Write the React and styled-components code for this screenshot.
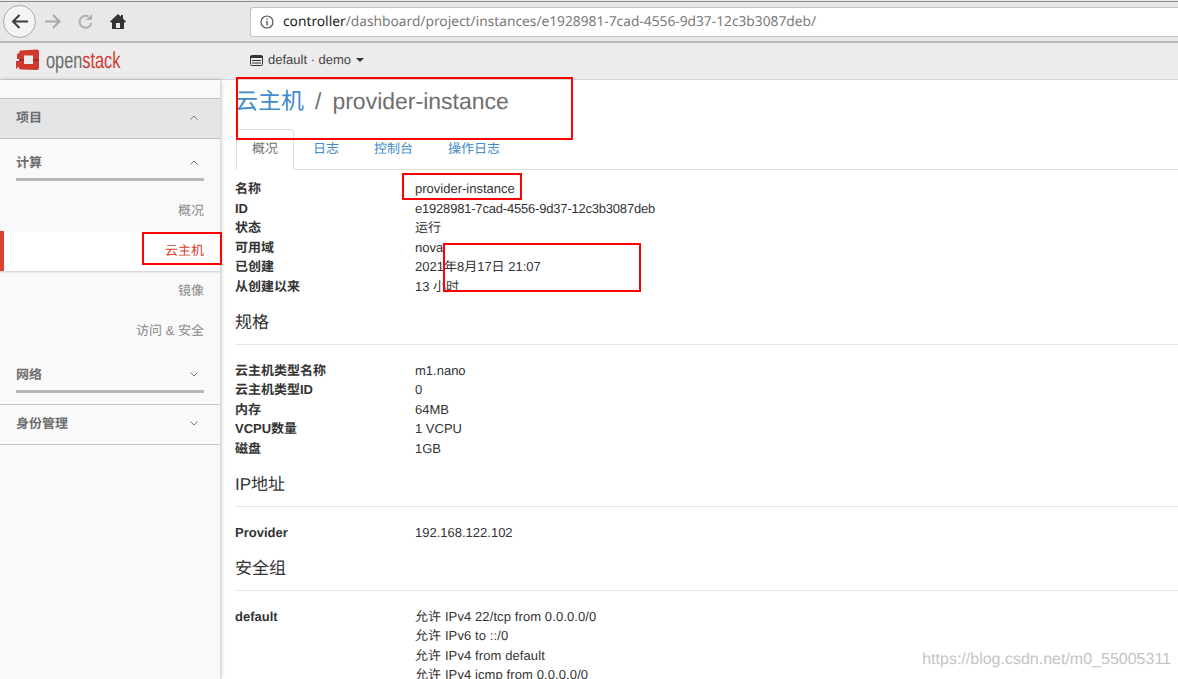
import React from 'react'
import styled, { createGlobalStyle } from 'styled-components'

const Global = createGlobalStyle`
  html, body { margin: 0; padding: 0; background: #fff; }
  body {
    font-family: "Liberation Sans", "Noto Sans CJK SC", sans-serif;
    font-size: 13px;
    line-height: 19.5px;
    color: #333;
    text-rendering: geometricPrecision;
  }
`

const Page = styled.div`
  position: relative;
  width: 1178px;
  height: 679px;
  overflow: hidden;
`

const BrowserBar = styled.div`
  height: 42px;
  box-sizing: border-box;
  border-bottom: 1px solid #b6b6b3;
  background: #e8e8e7;
  display: flex;
  align-items: flex-start;
  padding: 5px 0 0 3px;
  position: relative;
  &::before {
    content: '';
    position: absolute;
    left: 0;
    right: 0;
    top: 1px;
    height: 1px;
    background: #8e8e8c;
  }
`

const NavCluster = styled.div`
  display: flex;
  align-items: center;
  height: 33px;
  width: 247px;
  flex: none;
`

const BackButton = styled.div`
  width: 33px;
  height: 33px;
  box-sizing: border-box;
  border-radius: 50%;
  border: 1px solid #a8a8a6;
  background: #f4f4f3;
  display: flex;
  align-items: center;
  justify-content: center;
  flex: none;
`

const NavIcon = styled.div`
  display: flex;
  flex: none;
  margin-left: ${p => p.$shift}px;
`

const UrlField = styled.div`
  flex: 1;
  height: 30px;
  margin-top: 2px;
  box-sizing: border-box;
  background: #fff;
  border: 1px solid #c4c4c1;
  border-right: none;
  border-radius: 3px 0 0 3px;
  display: flex;
  align-items: center;
  padding-left: 9px;
  font-family: "Noto Sans", sans-serif;
  font-size: 13.75px;
  color: #7a7a7a;
`

const UrlHost = styled.span`
  color: #222;
  margin-left: 9px;
`

const TopBar = styled.div`
  height: 38px;
  box-sizing: border-box;
  background: #ececec;
  border-top: 1px solid #b9b9b7;
  border-bottom: 1px solid #d6d6d6;
  display: flex;
  align-items: center;
  padding-bottom: 2px;
`

const Brand = styled.div`
  width: 250px;
  flex: none;
  display: flex;
  align-items: center;
  padding-left: 15px;
  box-sizing: border-box;
  gap: 6px;
`

const BrandText = styled.span`
  display: inline-block;
  font-size: 23px;
  line-height: 24px;
  color: #6b6b6b;
  transform: scaleX(0.71);
  transform-origin: left center;
  b {
    font-weight: 400;
    color: #cf3a32;
  }
`

const ProjectPicker = styled.div`
  display: flex;
  align-items: center;
  gap: 5px;
  font-size: 13px;
  color: #444;
`

const Caret = styled.span`
  width: 0;
  height: 0;
  border-left: 4px solid transparent;
  border-right: 4px solid transparent;
  border-top: 4px solid #333;
`

const Body = styled.div`
  display: flex;
  height: 599px;
`

const Sidebar = styled.aside`
  width: 220px;
  flex: none;
  box-sizing: border-box;
  padding-top: 18px;
  background: #f9f9f9;
  box-shadow: 1px 0 4px rgba(0, 0, 0, 0.25);
  position: relative;
`

const TopSection = styled.div`
  height: 41px;
  box-sizing: border-box;
  margin-top: ${p => p.$gap || 0}px;
  border-top: 1px solid #c3c3c3;
  border-bottom: 1px solid #c3c3c3;
  background: ${p => (p.$shaded ? '#e4e5e7' : 'transparent')};
  display: flex;
  align-items: center;
  justify-content: space-between;
  padding: 0 22px 2px 16px;
  font-weight: 700;
  color: #6e6e6e;
`

const SubSection = styled.div`
  margin: 0 16px;
  height: 42px;
  box-sizing: border-box;
  padding: 14px 6px 0 0;
  border-bottom: 3px solid #b8b8b8;
  display: flex;
  justify-content: space-between;
  font-weight: 700;
  color: #6e6e6e;
  svg {
    margin-top: 7px;
  }
`

const NavItem = styled.div`
  height: 40px;
  box-sizing: border-box;
  padding-right: 16px;
  display: flex;
  align-items: center;
  justify-content: flex-end;
  color: ${p => (p.$active ? '#d9412f' : '#8a8a8a')};
  background: ${p => (p.$active ? '#fff' : 'transparent')};
  border-left: ${p => (p.$active ? '4px solid #dc4131' : 'none')};
  box-shadow: ${p => (p.$active ? '0 1px 2px rgba(0,0,0,0.18)' : 'none')};
`

const Items = styled.div`
  padding-top: 10px;
`

const Main = styled.main`
  flex: 1;
  padding: 0 0 0 15px;
  min-width: 0;
`

const Title = styled.h1`
  margin: 0;
  height: 41px;
  padding-top: 8px;
  font-weight: 400;
  font-size: 23px;
  line-height: 26px;
  color: #6f6f6f;
  box-sizing: content-box;
  a {
    color: #428bca;
  }
  i {
    font-style: normal;
    margin: 0 11px;
  }
`

const Tabs = styled.div`
  display: flex;
  height: 41px;
  box-sizing: border-box;
  margin-left: 1px;
  border-bottom: 1px solid #ddd;
`

const Tab = styled.div`
  box-sizing: border-box;
  height: ${p => (p.$active ? 41 : 40)}px;
  padding: 9px 15px 0 15px;
  margin-right: 3px;
  line-height: 20px;
  color: ${p => (p.$active ? '#6f6f6f' : '#428bca')};
  background: ${p => (p.$active ? '#fff' : 'transparent')};
  border: 1px solid ${p => (p.$active ? '#ddd' : 'transparent')};
  border-bottom: ${p => (p.$active ? '1px solid #fff' : 'none')};
  border-radius: 4px 4px 0 0;
`

const List = styled.dl`
  margin: ${p => p.$top}px 0 0;
  display: grid;
  grid-template-columns: 180px 1fr;
  grid-auto-rows: 19.5px;
  color: #333;
  dt {
    font-weight: 700;
  }
  dd {
    margin: 0;
    letter-spacing: ${p => p.$track || 0}px;
  }
`

const Uuid = styled.span`
  letter-spacing: -0.2px;
`

const Heading = styled.h4`
  margin: 17px 0 0;
  height: 30.5px;
  box-sizing: content-box;
  border-bottom: 1px solid #e6e6e6;
  font-weight: 400;
  font-size: 17px;
  line-height: 20px;
  color: #333;
`

const Mark = styled.div`
  position: absolute;
  box-sizing: border-box;
  border: 2px solid #f00;
  left: ${p => p.$x}px;
  top: ${p => p.$y}px;
  width: ${p => p.$w}px;
  height: ${p => p.$h}px;
`

const Watermark = styled.div`
  position: absolute;
  right: 7px;
  top: 650px;
  font-size: 16px;
  line-height: 20px;
  color: #c4c4c4;
`

const Chevron = ({ up }) => (
  <svg width="8" height="5" viewBox="0 0 8 5">
    <path d={up ? 'M.5 4.500 4 1l3.500 3.500' : 'M.5.5 4 4 7.500.5'} fill="none" stroke="#777" strokeWidth="1" />
  </svg>
)

const Logo = () => (
  <svg width="25" height="24" viewBox="0 0 25 24">
    <path d="M5 2.500 22 1.500q2 0 2 2V20q0 2-2 2L6 21.500q-2 0-2-1.500v-1.500L1 21V13h3V11H2V6l2-1z" fill="#d0392d" />
    <path d="M9 7.500h9V16H9z" fill="#ececec" />
    <path d="M5 11h4v2H5zM18 11h6v2h-6z" fill="#a92a22" />
  </svg>
)

const overview = [
  ['名称', 'provider-instance'],
  ['ID', <Uuid>e1928981-7cad-4556-9d37-12c3b3087deb</Uuid>],
  ['状态', '运行'],
  ['可用域', 'nova'],
  ['已创建', '2021年8月17日 21:07'],
  ['从创建以来', '13 小时'],
]

const specs = [
  ['云主机类型名称', 'm1.nano'],
  ['云主机类型ID', '0'],
  ['内存', '64MB'],
  ['VCPU数量', '1 VCPU'],
  ['磁盘', '1GB'],
]

const rules = [
  ['default', '允许 IPv4 22/tcp from 0.0.0.0/0'],
  ['', '允许 IPv6 to ::/0'],
  ['', '允许 IPv4 from default'],
  ['', '允许 IPv4 icmp from 0.0.0.0/0'],
]

const Rows = ({ rows, top, track }) => (
  <List $top={top} $track={track}>
    {rows.map(([k, v], i) => (
      <React.Fragment key={i}>
        <dt>{k}</dt>
        <dd>{v}</dd>
      </React.Fragment>
    ))}
  </List>
)

export default function App() {
  return (
    <Page>
      <Global />
      <BrowserBar>
        <NavCluster>
          <BackButton>
            <svg width="17" height="15" viewBox="0 0 17 15">
              <path d="M17 7.500H2M8.500 1 2 7.500 8.500 14" fill="none" stroke="#3c3c3c" strokeWidth="2" />
            </svg>
          </BackButton>
          <NavIcon $shift={9}>
            <svg width="16" height="15" viewBox="0 0 16 15">
              <path d="M0 7.500h14M8 1l6.500 6.500L8 14" fill="none" stroke="#a9a9a7" strokeWidth="2" />
            </svg>
          </NavIcon>
          <NavIcon $shift={17}>
            <svg width="15" height="15" viewBox="0 0 15 15">
              <path d="M10.500 2.500A6 6 0 1 0 13.500 9" fill="none" stroke="#b0b0ae" strokeWidth="2" />
              <path d="M14 0v6H8z" fill="#b0b0ae" />
            </svg>
          </NavIcon>
          <NavIcon $shift={17}>
            <svg width="16" height="15" viewBox="0 0 16 15">
              <path fillRule="evenodd" d="M8 0 0 7.500l1.200 1.200L2 8v7h12V8l.8.7L16 7.500 13 4.700V1h-2v1.800zM6 14V9h4v5H6z" fill="#333" />
            </svg>
          </NavIcon>
        </NavCluster>
        <UrlField>
          <svg width="14" height="14" viewBox="0 0 14 14">
            <circle cx="7" cy="7" r="6" fill="none" stroke="#555" strokeWidth="1.200" />
            <path d="M7 6v4.500M7 3.500v1.300" stroke="#555" strokeWidth="1.400" />
          </svg>
          <UrlHost>controller</UrlHost>/dashboard/project/instances/e1928981-7cad-4556-9d37-12c3b3087deb/
        </UrlField>
      </BrowserBar>
      <TopBar>
        <Brand>
          <Logo />
          <BrandText>open<b>stack</b></BrandText>
        </Brand>
        <ProjectPicker>
          <svg width="13" height="11" viewBox="0 0 13 11">
            <rect x="0.500" y="0.500" width="12" height="10" rx="1" fill="none" stroke="#333" />
            <path d="M0 1h13v2H0zM2 5h9v1H2zM2 7.500h9v1H2z" fill="#333" />
          </svg>
          <span>default · demo</span>
          <Caret />
        </ProjectPicker>
      </TopBar>
      <Body>
        <Sidebar>
          <TopSection $shaded>项目<Chevron up /></TopSection>
          <SubSection>计算<Chevron up /></SubSection>
          <Items>
            <NavItem>概况</NavItem>
            <NavItem $active>云主机</NavItem>
            <NavItem>镜像</NavItem>
            <NavItem>访问 &amp; 安全</NavItem>
          </Items>
          <SubSection>网络<Chevron /></SubSection>
          <TopSection $gap={11}>身份管理<Chevron /></TopSection>
        </Sidebar>
        <Main>
          <Title><a>云主机</a><i>/</i>provider-instance</Title>
          <Tabs>
            <Tab $active>概况</Tab>
            <Tab>日志</Tab>
            <Tab>控制台</Tab>
            <Tab>操作日志</Tab>
          </Tabs>
          <Rows rows={overview} top={9} />
          <Heading>规格</Heading>
          <Rows rows={specs} top={16} />
          <Heading>IP地址</Heading>
          <Rows rows={[['Provider', '192.168.122.102']]} top={16} />
          <Heading>安全组</Heading>
          <Rows rows={rules} top={16} track={0.1} />
        </Main>
      </Body>
      <Mark $x={236} $y={77} $w={337} $h={63} />
      <Mark $x={402} $y={173} $w={120} $h={27} />
      <Mark $x={443} $y={243} $w={198} $h={49} />
      <Mark $x={142} $y={232} $w={80} $h={33} />
      <Watermark>https://blog.csdn.net/m0_55005311</Watermark>
    </Page>
  )
}
